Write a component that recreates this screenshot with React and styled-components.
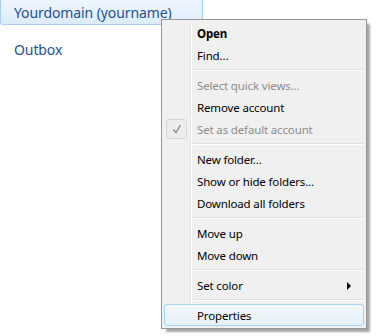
import React from "react";
import styled, { createGlobalStyle } from "styled-components";

const GlobalStyle = createGlobalStyle`
  html, body {
    margin: 0;
    padding: 0;
    background: #ffffff;
  }
  body {
    font-family: "Noto Sans", "Open Sans", sans-serif;
  }
`;

const Page = styled.div`
  position: relative;
  width: 378px;
  height: 336px;
  overflow: hidden;
  background: #ffffff;
`;

const FolderPane = styled.div`
  display: flex;
  flex-direction: column;
  width: 203px;
`;

const Folder = styled.div`
  height: 25px;
  display: flex;
  align-items: center;
  padding-left: 13px;
  margin-bottom: ${(p) => (p.$selected ? "12px" : "0")};
  font-size: 14px;
  letter-spacing: -0.1px;
  color: #265190;
  box-sizing: border-box;
  border: 1px solid ${(p) => (p.$selected ? "#a9cdf0" : "transparent")};
  border-top: none;
  border-radius: 0 0 3px 3px;
  background: ${(p) =>
    p.$selected ? "linear-gradient(#eef6fe, #dcecfc)" : "transparent"};
`;

const Menu = styled.div`
  position: absolute;
  left: 161px;
  top: 19px;
  width: 206px;
  box-sizing: border-box;
  padding: 2px;
  background: #f0f0f0;
  border: 1px solid #979797;
  box-shadow: 4px 4px 2px -1px rgba(0, 0, 0, 0.35);
  display: flex;
  flex-direction: column;
  font-size: 11.5px;
  letter-spacing: -0.15px;
  color: #000;
  &::before {
    content: "";
    position: absolute;
    top: 2px;
    bottom: 2px;
    left: 28px;
    width: 1px;
    background: #e2e3e3;
    border-right: 1px solid #ffffff;
  }
`;

const Item = styled.div`
  position: relative;
  height: 22px;
  display: flex;
  align-items: center;
  padding-left: 32px;
  box-sizing: border-box;
  font-weight: ${(p) => (p.$bold ? 700 : 400)};
  color: ${(p) => (p.$disabled ? "#8d8d8d" : "#000")};
  border: 1px solid ${(p) => (p.$hot ? "#a8d4f6" : "transparent")};
  border-radius: 3px;
  background: ${(p) =>
    p.$hot ? "linear-gradient(#f3f8fd, #e6f0fb)" : "transparent"};
  z-index: 1;
`;

const Separator = styled.div`
  height: 8px;
  display: flex;
  align-items: center;
  padding-left: 29px;
  &::after {
    content: "";
    flex: 1;
    height: 1px;
    background: #e0e0e0;
    border-bottom: 1px solid #ffffff;
  }
`;

const CheckBox = styled.span`
  position: absolute;
  left: 1px;
  top: 0;
  width: 21px;
  height: 20px;
  box-sizing: border-box;
  border: 1px solid #d6d6d6;
  border-radius: 3px;
  background: #ececec;
  display: flex;
  align-items: center;
  justify-content: center;
`;

const Arrow = styled.span`
  position: absolute;
  right: 12px;
  top: 7px;
  width: 0;
  height: 0;
  border-top: 4px solid transparent;
  border-bottom: 4px solid transparent;
  border-left: 4px solid #000;
`;

export default function App() {
  return (
    <Page>
      <GlobalStyle />
      <FolderPane>
        <Folder $selected>Yourdomain (yourname)</Folder>
        <Folder>Outbox</Folder>
      </FolderPane>
      <Menu>
        <Item $bold>Open</Item>
        <Item>Find...</Item>
        <Separator />
        <Item $disabled>Select quick views...</Item>
        <Item>Remove account</Item>
        <Item $disabled>
          <CheckBox>
            <svg width="10" height="10" viewBox="0 0 10 10">
              <path d="M1.5 5.5 L4 8.5 L8.5 1" fill="none" stroke="#8d8d8d" strokeWidth="1.4" />
            </svg>
          </CheckBox>
          Set as default account
        </Item>
        <Separator />
        <Item>New folder...</Item>
        <Item>Show or hide folders...</Item>
        <Item>Download all folders</Item>
        <Separator />
        <Item>Move up</Item>
        <Item>Move down</Item>
        <Separator />
        <Item>
          Set color
          <Arrow />
        </Item>
        <Separator />
        <Item $hot>Properties</Item>
      </Menu>
    </Page>
  );
}
